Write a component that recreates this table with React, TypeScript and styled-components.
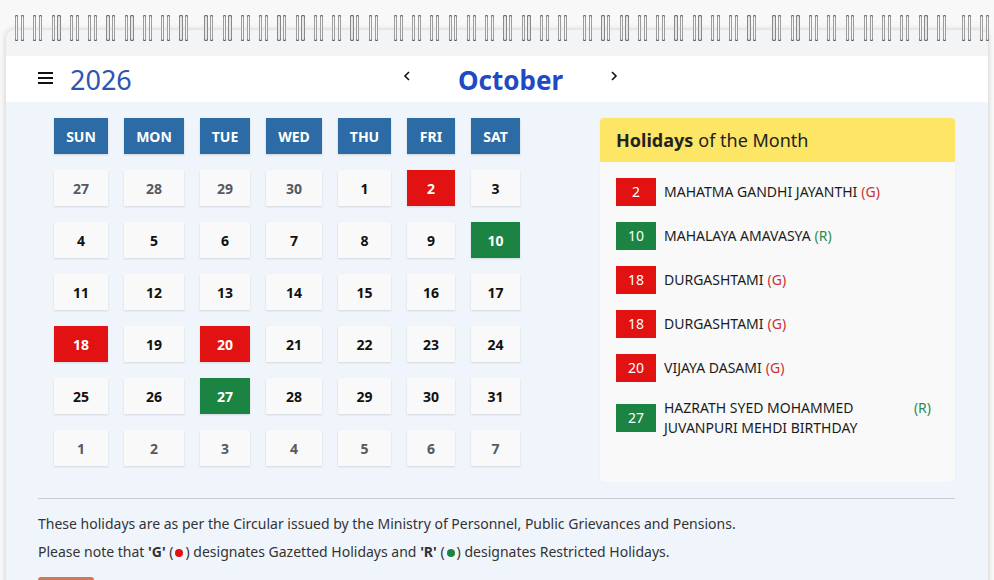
import styled, { createGlobalStyle } from 'styled-components';

const GlobalStyle = createGlobalStyle`
  html, body {
    margin: 0;
    padding: 0;
    background: #f8f8f8;
    font-family: "Noto Sans", "Open Sans", sans-serif;
  }
`;

const Page = styled.div`
  position: relative;
  width: 994px;
  height: 580px;
  overflow: hidden;
  padding: 30px 6px 0 6px;
  box-sizing: border-box;
`;

const RingBar = styled.div`
  position: absolute;
  top: 15px;
  left: 15px;
  display: flex;
  gap: 16px;
  z-index: 2;
`;

const RingGroup = styled.div`
  display: flex;
  gap: 9.3px;
`;

const RingPair = styled.div`
  display: flex;
  gap: 2.6px;
`;

const Loop = styled.div`
  width: 3.2px;
  height: 26px;
  border-radius: 2px;
  background: linear-gradient(90deg, #4a4a4a 0, #e2e2e2 30%, #fafafa 55%, #b0b0b0 80%, #4a4a4a 100%);
  box-shadow: inset 0 1px 0 #555, inset 0 -1px 0 #555;
`;

const Card = styled.div`
  background: #f0f5fc;
  border-radius: 8px 8px 0 0;
  box-shadow: 0 0 6px rgba(0, 0, 0, 0.18);
  padding-top: 26px;
  min-height: 560px;
  background-image: linear-gradient(#f3f4f6, #f3f4f6);
  background-size: 100% 26px;
  background-repeat: no-repeat;
`;

const Header = styled.div`
  height: 46px;
  background: #ffffff;
  display: flex;
  align-items: center;
  padding-left: 32px;
`;

const Burger = styled.div`
  width: 15px;
  display: flex;
  flex-direction: column;
  gap: 3px;
  margin-right: 17px;
  margin-top: -3px;

  span {
    display: block;
    height: 2px;
    background: #111;
  }
`;

const Year = styled.div`
  font-size: 27px;
  color: #2f54b3;
  width: 333px;
  line-height: 1;
  margin-top: 1px;
`;

const MonthNav = styled.div`
  display: flex;
  align-items: center;
  gap: 47px;
`;

const Arrow = styled.svg`
  width: 8px;
  height: 10px;
  margin-top: -6px;
`;

const Month = styled.div`
  font-size: 26px;
  font-weight: 700;
  color: #2149c1;
  line-height: 1;
  margin-top: 2px;
`;

const Content = styled.div`
  padding: 16px 33px 0 32px;
`;

const Row = styled.div`
  display: flex;
  justify-content: space-between;
`;

const Grid = styled.div`
  margin-left: 16px;
  display: grid;
  grid-template-columns: 54px 60px 50px 56px 53px 48px 49px;
  grid-auto-rows: 36px;
  column-gap: 16px;
  row-gap: 16px;
  align-self: flex-start;
`;

const DayHead = styled.div`
  background: #2d6ba6;
  color: #fff;
  font-weight: 700;
  font-size: 14px;
  display: flex;
  align-items: center;
  justify-content: center;
  box-shadow: 0 1px 2px rgba(0, 0, 0, 0.15);
`;

const Day = styled.div<{ $kind: 'out' | 'in' | 'G' | 'R' }>`
  display: flex;
  align-items: center;
  justify-content: center;
  font-weight: 700;
  font-size: 14px;
  box-shadow: 0 1px 2px rgba(0, 0, 0, 0.12);
  background: ${(p) => (p.$kind === 'G' ? '#e31212' : p.$kind === 'R' ? '#1b8443' : '#f9f9f9')};
  color: ${(p) => (p.$kind === 'out' ? '#555a60' : p.$kind === 'in' ? '#111' : '#fff')};
`;

const Panel = styled.div`
  width: 355px;
  height: 364px;
  background: #f9f9f9;
  border-radius: 4px;
  box-shadow: 0 0 2px rgba(0, 0, 0, 0.05);
`;

const PanelHead = styled.div`
  background: #fde566;
  height: 44px;
  border-radius: 4px 4px 0 0;
  display: flex;
  align-items: center;
  padding-left: 16px;
  font-size: 18px;
  color: #222;

  b {
    font-weight: 700;
    margin-right: 5px;
  }
`;

const List = styled.div`
  padding: 16px 24px 0 16px;
  display: flex;
  flex-direction: column;
  gap: 16px;
`;

const Item = styled.div`
  display: flex;
  align-items: center;
  gap: 8px;
  font-size: 14px;
  color: #1c1c1c;
  line-height: 20px;
  min-height: 28px;
`;

const Badge = styled.div<{ $type: 'G' | 'R' }>`
  flex: none;
  width: 40px;
  height: 28px;
  display: flex;
  align-items: center;
  justify-content: center;
  color: #fff;
  font-size: 14px;
  background: ${(p) => (p.$type === 'G' ? '#e31212' : '#1b8443')};
`;

const Label = styled.div`
  display: flex;
  align-items: flex-start;
  gap: 4px;
`;

const Tag = styled.span<{ $type: 'G' | 'R' }>`
  flex: none;
  color: ${(p) => (p.$type === 'G' ? '#d03030' : '#2e8a55')};
`;

const Divider = styled.hr`
  border: none;
  border-top: 1px solid #c9ccd3;
  margin: 16px 0 15px;
`;

const Note = styled.p`
  margin: 0 0 8px;
  font-size: 14px;
  line-height: 20px;
  color: #333;
`;

const Dot = styled.span<{ $c: string }>`
  display: inline-block;
  width: 8px;
  height: 8px;
  border-radius: 50%;
  background: ${(p) => p.$c};
  margin: 0 2px;
  vertical-align: 0;
`;

const PrintButton = styled.button`
  margin-top: 7px;
  width: 56px;
  height: 30px;
  border: none;
  border-radius: 3px;
  background: #cf7a55;
  color: #fff;
`;

type Kind = 'out' | 'in' | 'G' | 'R';

const weekDays = ['SUN', 'MON', 'TUE', 'WED', 'THU', 'FRI', 'SAT'];

const holidays: Record<number, 'G' | 'R'> = { 2: 'G', 10: 'R', 18: 'G', 20: 'G', 27: 'R' };

const cells: { n: number; kind: Kind }[] = [
  ...[27, 28, 29, 30].map((n) => ({ n, kind: 'out' as Kind })),
  ...Array.from({ length: 31 }, (_, i) => ({ n: i + 1, kind: (holidays[i + 1] ?? 'in') as Kind })),
  ...[1, 2, 3, 4, 5, 6, 7].map((n) => ({ n, kind: 'out' as Kind })),
];

const list: { d: number; name: string; t: 'G' | 'R' }[] = [
  { d: 2, name: 'MAHATMA GANDHI JAYANTHI', t: 'G' },
  { d: 10, name: 'MAHALAYA AMAVASYA', t: 'R' },
  { d: 18, name: 'DURGASHTAMI', t: 'G' },
  { d: 18, name: 'DURGASHTAMI', t: 'G' },
  { d: 20, name: 'VIJAYA DASAMI', t: 'G' },
  { d: 27, name: 'HAZRATH SYED MOHAMMED JUVANPURI MEHDI BIRTHDAY', t: 'R' },
];

const App = () => {
  return (
    <Page>
      <GlobalStyle />
      <RingBar>
        {Array.from({ length: 6 }, (_, g) => (
          <RingGroup key={g}>
            {Array.from({ length: 10 }, (_, p) => (
              <RingPair key={p}>
                <Loop />
                <Loop />
              </RingPair>
            ))}
          </RingGroup>
        ))}
      </RingBar>
      <Card>
        <Header>
          <Burger>
            <span />
            <span />
            <span />
          </Burger>
          <Year>2026</Year>
          <MonthNav>
            <Arrow viewBox="0 0 8 10">
              <path d="M6 1 L2 5 L6 9" fill="none" stroke="#111" strokeWidth="1.6" />
            </Arrow>
            <Month>October</Month>
            <Arrow viewBox="0 0 8 10">
              <path d="M2 1 L6 5 L2 9" fill="none" stroke="#111" strokeWidth="1.6" />
            </Arrow>
          </MonthNav>
        </Header>
        <Content>
          <Row>
            <Grid>
              {weekDays.map((w) => (
                <DayHead key={w}>{w}</DayHead>
              ))}
              {cells.map((c, i) => (
                <Day key={i} $kind={c.kind}>
                  {c.n}
                </Day>
              ))}
            </Grid>
            <Panel>
              <PanelHead>
                <b>Holidays</b> of the Month
              </PanelHead>
              <List>
                {list.map((h, i) => (
                  <Item key={i}>
                    <Badge $type={h.t}>{h.d}</Badge>
                    <Label>
                      <span>{h.name}</span>
                      <Tag $type={h.t}>({h.t})</Tag>
                    </Label>
                  </Item>
                ))}
              </List>
            </Panel>
          </Row>
          <Divider />
          <Note>
            These holidays are as per the Circular issued by the Ministry of Personnel, Public Grievances and
            Pensions.
          </Note>
          <Note>
            Please note that <b>'G'</b> (<Dot $c="#e31212" />) designates Gazetted Holidays and <b>'R'</b> (
            <Dot $c="#1b8443" />) designates Restricted Holidays.
          </Note>
          <PrintButton />
        </Content>
      </Card>
    </Page>
  );
};

export default App;
